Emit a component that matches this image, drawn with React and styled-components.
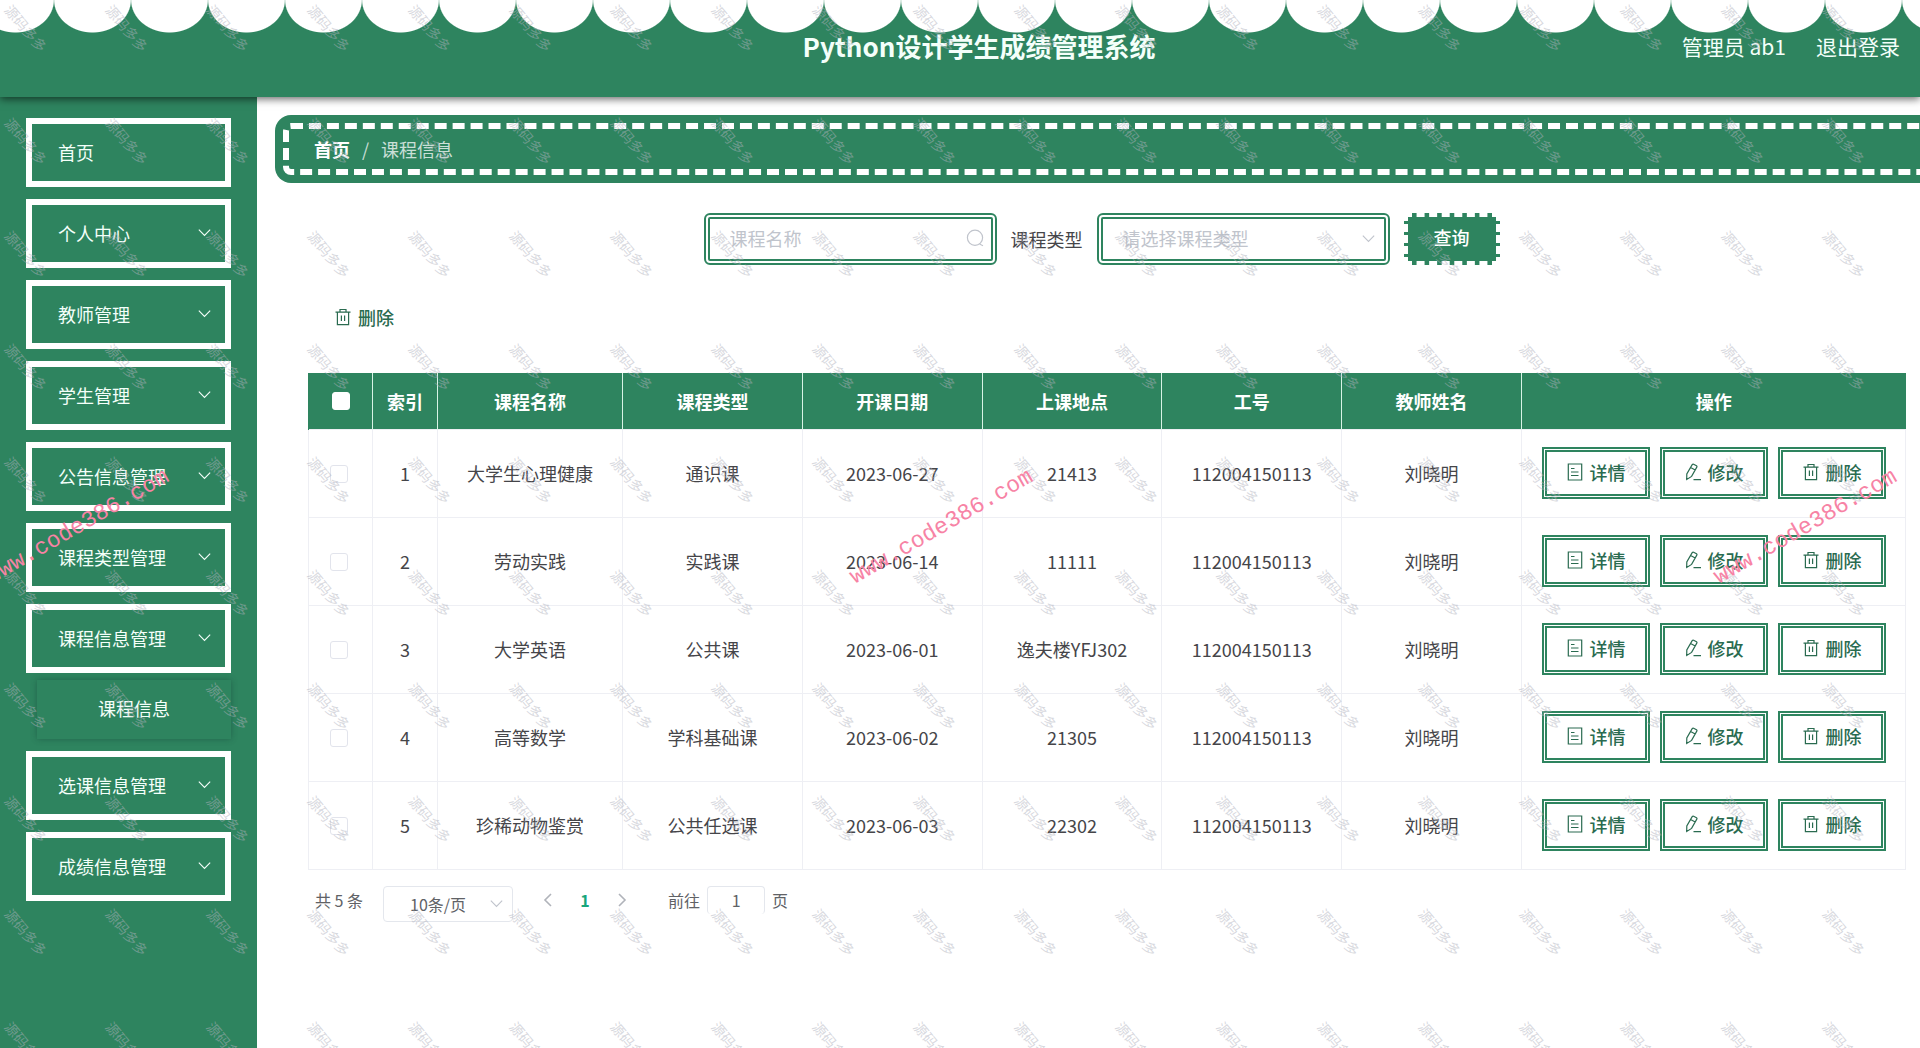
import React, { useState } from 'react';
import styled, { createGlobalStyle } from 'styled-components';

const green = '#2e845f';
const darkGreen = '#2a6b50';

const GlobalStyle = createGlobalStyle`
    * {
        box-sizing:border-box;
    }
    body {
        margin:0;
        background-color:#fff;
        font-family:"Noto Sans CJK SC", "Noto Sans", sans-serif;
        font-size:18px;
        color:#454549;
    }
    button, input, select {
        font-family:inherit;
        font-size:inherit;
        color:inherit;
        margin:0;
    }
    a {
        color:inherit;
        text-decoration:none;
    }
`

const Page = styled.div`
    min-height:100vh;
    display:flex;
    flex-direction:column;
    position:relative;
    overflow:hidden;
`

const Header = styled.header`
    position:relative;
    z-index:1;
    display:grid;
    grid-template-columns:1fr auto 1fr;
    align-items:center;
    height:97px;
    padding:0 20px 6px 58px;
    color:#f4fffa;
    background-color:${green};
    background-image:radial-gradient(39px 33px at 50% 0, #fff 97%, transparent 100%);
    background-size:77px 34px;
    background-position:-23px 0;
    background-repeat:repeat-x;
    box-shadow:0 2px 8px rgba(0,0,0,0.6);
`

const Title = styled.h1`
    grid-column:2;
    margin:0;
    font-size:26px;
    line-height:40px;
    font-weight:700;
`

const UserLinks = styled.div`
    display:flex;
    justify-content:flex-end;
    gap:30px;
    font-size:21px;
    line-height:30px;
`

const Body = styled.div`
    flex:1;
    display:flex;
`

const Sidebar = styled.nav`
    flex:none;
    width:257px;
    padding:21px 26px;
    background-color:${green};
`

const MenuList = styled.ul`
    display:flex;
    flex-direction:column;
    gap:12px;
    margin:0;
    padding:0;
    list-style:none;
`

const MenuItem = styled.button`
    display:flex;
    justify-content:space-between;
    align-items:center;
    width:100%;
    height:69px;
    padding:0 12px 2px 26px;
    border:6px solid #fff;
    background-color:${green};
    color:#f4fffa;
    text-align:left;
    cursor:pointer;
`

const SubMenu = styled.a`
    display:block;
    height:59px;
    margin:7px 0 0 11px;
    line-height:56px;
    text-align:center;
    color:#f4fffa;
    box-shadow:0 0 6px rgba(20,60,50,0.45);
`

const Main = styled.main`
    flex:1;
    min-width:0;
    padding:26px 14px 0 51px;
`

const Breadcrumb = styled.nav`
    display:flex;
    align-items:center;
    gap:12px;
    height:52px;
    margin:0 -30px 38px -25px;
    padding:0 25px;
    border:6px dashed #fff;
    border-radius:8px;
    background-color:${green};
    box-shadow:0 0 0 8px ${green};
    color:rgba(255,255,255,0.75);

    a {
        font-weight:700;
        color:#fff;
    }
`

const SearchBar = styled.form`
    display:flex;
    justify-content:center;
    align-items:center;
    gap:14px;
    padding-right:11px;
`

const Field = styled.div`
    display:flex;
    align-items:center;
    width:293px;
    height:52px;
    padding:0 7px 2px 0;
    border:6px double ${green};
    border-radius:6px;
    color:#c0c4cc;

    input, select {
        flex:1;
        min-width:0;
        height:100%;
        padding:0 0 0 20px;
        border:0;
        outline:0;
        appearance:none;
        background:transparent;
    }
    input::placeholder {
        color:#c0c4cc;
    }
`

const QueryBtn = styled.button`
    width:96px;
    height:52px;
    padding:0 0 4px;
    border:4px dashed #fff;
    border-radius:4px;
    background-color:${green};
    color:#fff;
    font-weight:500;
    cursor:pointer;
`

const Toolbar = styled.div`
    display:flex;
    padding:38px 0 42px 26px;
`

const TextBtn = styled.button`
    display:flex;
    align-items:center;
    justify-content:center;
    gap:6px;
    height:28px;
    padding:0;
    border:0;
    background:transparent;
    color:${darkGreen};
    font-weight:500;
    cursor:pointer;
`

const ActionBtn = styled(TextBtn)`
    width:108px;
    height:52px;
    padding-bottom:2px;
    border:5px double ${green};
`

const Table = styled.table`
    width:100%;
    table-layout:fixed;
    border-collapse:collapse;
    text-align:center;

    th {
        height:56px;
        padding:0;
        border-left:1px solid #d8f3e6;
        background-color:${green};
        color:#fff;
        font-weight:700;
    }
    th:first-child {
        border-left-color:${green};
    }
    td {
        height:88px;
        padding:0;
        border:1px solid #eeeff4;
    }
    td:first-child {
        padding:2px 3px 0 0;
    }
`

const Check = styled.input`
    appearance:none;
    display:block;
    width:18px;
    height:18px;
    margin:0 auto;
    border:1px solid ${props => props.$head ? '#fff' : '#e2e4ec'};
    border-radius:3px;
    background-color:#fff;
`

const Actions = styled.div`
    display:flex;
    justify-content:center;
    gap:10px;
`

const Pagination = styled.div`
    display:flex;
    align-items:flex-start;
    padding:16px 0 0 7px;
    font-size:16px;
    line-height:28px;
    color:#606266;
`

const PageSize = styled.div`
    display:flex;
    align-items:center;
    width:130px;
    height:36px;
    margin:0 28px 0 20px;
    padding-right:7px;
    border:1px solid #e4e7ed;
    border-radius:4px;
    color:#c0c4cc;

    select {
        flex:1;
        height:100%;
        padding:0 0 0 26px;
        border:0;
        appearance:none;
        background:transparent;
        color:#606266;
    }
`

const PageBtn = styled.button`
    display:flex;
    justify-content:center;
    width:${props => props.$wide ? '60px' : '14px'};
    height:28px;
    padding:0;
    border:0;
    align-items:center;
    background:transparent;
    color:${props => props.$wide ? '#18a67c' : '#b0b3ba'};
    font-weight:700;
    cursor:pointer;
`

const Jumper = styled.label`
    display:flex;
    gap:7px;
    margin-left:39px;

    input {
        width:58px;
        height:28px;
        padding:0;
        border:1px solid #e4e7ed;
        border-bottom:0;
        border-radius:4px;
        text-align:center;
    }
`

const StampLayer = styled.div`
    position:absolute;
    inset:0;
    z-index:2;
    overflow:hidden;
    pointer-events:none;
    display:grid;
    grid-template-columns:repeat(19, 101px);
    grid-auto-rows:113px;
`

const Stamp = styled.span`
    width:56px;
    height:16px;
    margin:20px 0 0 -2px;
    font-size:14px;
    line-height:16px;
    white-space:nowrap;
    color:rgba(176,178,190,0.5);
    transform:rotate(50deg);
`

const SiteLayer = styled.div`
    position:absolute;
    top:515px;
    left:-26px;
    z-index:3;
    display:flex;
    gap:657px;
    pointer-events:none;
`

const SiteMark = styled.span`
    flex:none;
    width:207px;
    font-family:"Liberation Mono", monospace;
    font-size:23px;
    line-height:24px;
    color:#f783a5;
    transform:rotate(-30deg);
`

const Svg = ({ size = 18, children }) => (
    <svg width={size} height={size} viewBox="0 0 18 18" fill="none" stroke="currentColor" strokeWidth="1.2" aria-hidden="true" style={{flex:"none"}}>
        {children}
    </svg>
)

const DownIcon = () => <Svg size={17}><path d="M3 6l6 6 6-6" /></Svg>
const SearchIcon = () => <Svg size={18}><circle cx="9" cy="8.8" r="7.6" /><path d="M13.5 15l3.5 1.8" /></Svg>
const TrashIcon = () => <Svg><path d="M1.5 4.2h15M6 4V1.5h6V4M3.4 4v12.6h11.2V4M7.4 7.5v5.5M10.6 7.5v5.5" /></Svg>
const DetailIcon = () => <Svg><path d="M2.3 1h13.4v16H2.3zM5 5.5h3.5M5 9h7.5M5 12.5h7.5" /></Svg>
const EditIcon = () => <Svg><path d="M8.2 1.6q.6-.8 1.4-.4l2.9 1.6q.8.5.3 1.3L7.6 13.4l-4.9 3 .1-5.4zM6.6 4.4l4.6 2.6M9.5 16.6H17" /></Svg>
const LeftIcon = () => <Svg><path d="M12 3L6 9l6 6" strokeWidth="1.6" /></Svg>
const RightIcon = () => <Svg><path d="M6 3l6 6-6 6" strokeWidth="1.6" /></Svg>

const menus = [
    { name: '首页', leaf: true },
    { name: '个人中心' },
    { name: '教师管理' },
    { name: '学生管理' },
    { name: '公告信息管理' },
    { name: '课程类型管理' },
    { name: '课程信息管理', child: '课程信息' },
    { name: '选课信息管理' },
    { name: '成绩信息管理' },
]

const columns = ['课程名称', '课程类型', '开课日期', '上课地点', '工号', '教师姓名', '操作']

const courses = [
    ['大学生心理健康', '通识课', '2023-06-27', '21413', '112004150113', '刘晓明'],
    ['劳动实践', '实践课', '2023-06-14', '11111', '112004150113', '刘晓明'],
    ['大学英语', '公共课', '2023-06-01', '逸夫楼YFJ302', '112004150113', '刘晓明'],
    ['高等数学', '学科基础课', '2023-06-02', '21305', '112004150113', '刘晓明'],
    ['珍稀动物鉴赏', '公共任选课', '2023-06-03', '22302', '112004150113', '刘晓明'],
]

function App() {
  const [name, setName] = useState('');

  return (
    <>
        <GlobalStyle />
        <Page>
            <Header>
                <Title>Python设计学生成绩管理系统</Title>
                <UserLinks>
                    <span>管理员 ab1</span>
                    <a href="#logout">退出登录</a>
                </UserLinks>
            </Header>

            <Body>
                <Sidebar>
                    <MenuList>
                        {menus.map(menu => (
                            <li key={menu.name}>
                                <MenuItem type="button">
                                    <span>{menu.name}</span>
                                    {!menu.leaf && <DownIcon />}
                                </MenuItem>
                                {menu.child && <SubMenu href="#course">{menu.child}</SubMenu>}
                            </li>
                        ))}
                    </MenuList>
                </Sidebar>

                <Main>
                    <Breadcrumb>
                        <a href="#home">首页</a>
                        <span>/</span>
                        <span>课程信息</span>
                    </Breadcrumb>

                    <SearchBar onSubmit={e => e.preventDefault()}>
                        <Field>
                            <input aria-label="课程名称" placeholder="课程名称" value={name} onChange={e => setName(e.target.value)} />
                            <SearchIcon />
                        </Field>
                        <label htmlFor="type">课程类型</label>
                        <Field>
                            <select id="type">
                                <option>请选择课程类型</option>
                            </select>
                            <DownIcon />
                        </Field>
                        <QueryBtn type="submit">查询</QueryBtn>
                    </SearchBar>

                    <Toolbar>
                        <TextBtn type="button"><TrashIcon />删除</TextBtn>
                    </Toolbar>

                    <Table>
                        <colgroup>
                            <col style={{width:"64px"}} />
                            <col style={{width:"65px"}} />
                            <col style={{width:"185px"}} />
                            <col span="5" />
                            <col style={{width:"384px"}} />
                        </colgroup>
                        <thead>
                            <tr>
                                <th><Check $head type="checkbox" aria-label="全选" /></th>
                                <th>索引</th>
                                {columns.map(col => <th key={col}>{col}</th>)}
                            </tr>
                        </thead>
                        <tbody>
                            {courses.map((course, index) => (
                                <tr key={index}>
                                    <td><Check type="checkbox" aria-label={course[0]} /></td>
                                    <td>{index + 1}</td>
                                    {course.map((text, i) => <td key={i}>{text}</td>)}
                                    <td>
                                        <Actions>
                                            <ActionBtn type="button"><DetailIcon />详情</ActionBtn>
                                            <ActionBtn type="button"><EditIcon />修改</ActionBtn>
                                            <ActionBtn type="button"><TrashIcon />删除</ActionBtn>
                                        </Actions>
                                    </td>
                                </tr>
                            ))}
                        </tbody>
                    </Table>

                    <Pagination>
                        <span>共 5 条</span>
                        <PageSize>
                            <select aria-label="每页条数">
                                <option>10条/页</option>
                            </select>
                            <DownIcon />
                        </PageSize>
                        <PageBtn type="button" aria-label="上一页"><LeftIcon /></PageBtn>
                        <PageBtn $wide type="button">1</PageBtn>
                        <PageBtn type="button" aria-label="下一页"><RightIcon /></PageBtn>
                        <Jumper>
                            前往
                            <input defaultValue="1" />
                            页
                        </Jumper>
                    </Pagination>
                </Main>
            </Body>

            <StampLayer aria-hidden="true">
                {[...Array(190)].map((_, index) => <Stamp key={index}>源码多多</Stamp>)}
            </StampLayer>
            <SiteLayer aria-hidden="true">
                {[...Array(3)].map((_, index) => <SiteMark key={index}>www.code386.com</SiteMark>)}
            </SiteLayer>
        </Page>
    </>
  );
}

export default App;
